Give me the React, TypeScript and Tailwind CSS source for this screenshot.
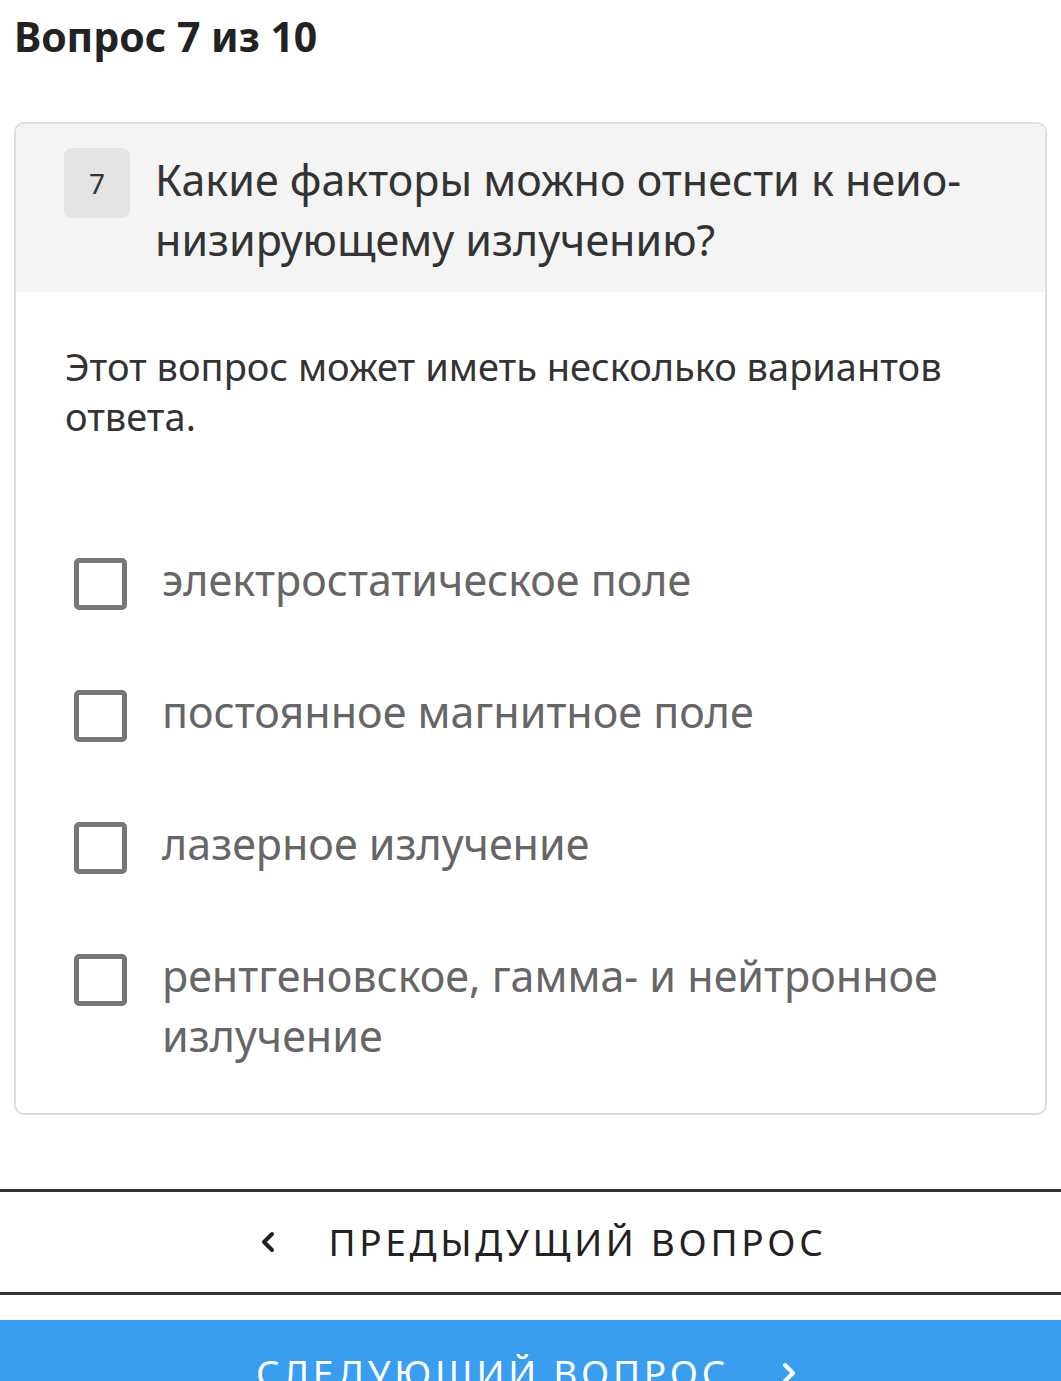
import { ChevronLeft, ChevronRight } from "lucide-react";

const options = [
  "электростатическое поле",
  "постоянное магнитное поле",
  "лазерное излучение",
  "рентгеновское, гамма- и нейтронное излучение",
];

const Option = ({ label }: { label: string }) => (
  <label className="flex items-start gap-[35px] pl-[9px] cursor-pointer">
    <span className="mt-[8px] w-[53px] h-[52px] shrink-0 rounded-[5px] border-[5px] border-[#777777] bg-white" />
    <span className="text-[43px] leading-[60px] text-[#666666]">{label}</span>
  </label>
);

export default function App() {
  return (
    <div className="bg-white min-h-screen overflow-hidden font-['Noto_Sans',sans-serif]">
      <h1 className="px-[14px] pt-[11px] text-[41px] leading-[50px] font-bold text-[#222222]">
        Вопрос 7 из 10
      </h1>

      <div className="mx-[14px] mt-[61px] rounded-[10px] border-2 border-[#dddddd] overflow-hidden">
        <div className="flex items-start gap-[25px] bg-[#f4f4f4] pl-[48px] pr-[30px] pt-[26px] pb-[22px]">
          <span className="-mt-[2px] w-[66px] h-[70px] shrink-0 flex items-center justify-center rounded-[8px] bg-[#e4e4e4] text-[28px] text-[#333333]">
            7
          </span>
          <p className="text-[43px] leading-[60px] text-[#333333] whitespace-nowrap">
            Какие факторы можно отнести к неио-
            <br />
            низирующему излучению?
          </p>
        </div>

        <div className="px-[49px] pt-[49px] pb-[47px]">
          <p className="text-[38px] leading-[50px] text-[#333333]">
            Этот вопрос может иметь несколько вариантов ответа.
          </p>
          <div className="mt-[109px] flex flex-col gap-[72px]">
            {options.map((o) => (
              <Option key={o} label={o} />
            ))}
          </div>
        </div>
      </div>

      <div className="mt-[74px] flex flex-col gap-[25px]">
        <button className="w-full h-[106px] border-y-[3px] border-[#333333] bg-white flex items-center justify-center gap-[44px] pl-[18px] text-[#222222]">
          <ChevronLeft size={32} strokeWidth={3} />
          <span className="text-[37px] tracking-[0.1em] uppercase">Предыдущий вопрос</span>
        </button>
        <button className="w-full h-[106px] bg-[#399df0] flex items-center justify-center gap-[44px] text-white">
          <span className="text-[37px] tracking-[0.1em] uppercase">Следующий вопрос</span>
          <ChevronRight size={32} strokeWidth={3} />
        </button>
      </div>
    </div>
  );
}
